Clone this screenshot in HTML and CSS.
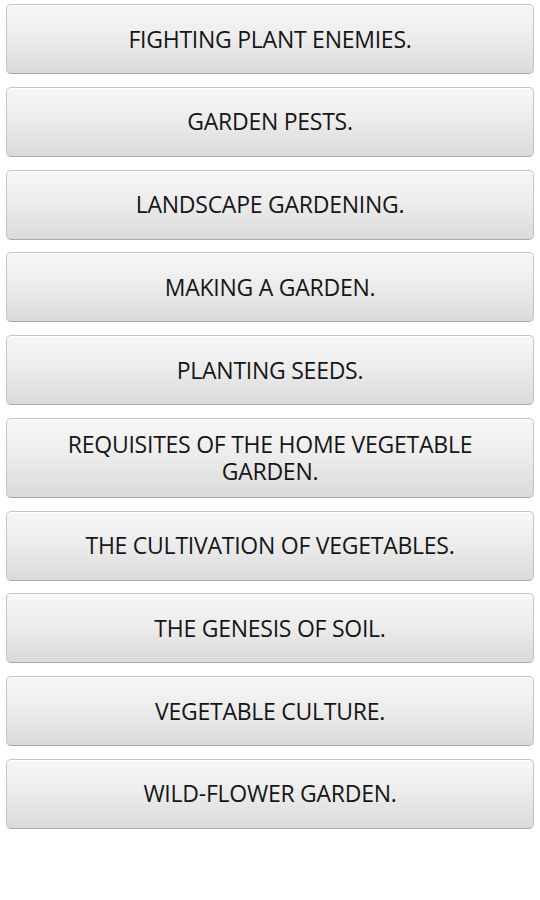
FILE: index.html
```html
<!DOCTYPE html>
<html>
<head>
<meta charset="utf-8">
<link rel="stylesheet" href="styles.css">
</head>
<body>
<div class="list">
  <div class="btn">FIGHTING PLANT ENEMIES.</div>
  <div class="btn">GARDEN PESTS.</div>
  <div class="btn">LANDSCAPE GARDENING.</div>
  <div class="btn">MAKING A GARDEN.</div>
  <div class="btn">PLANTING SEEDS.</div>
  <div class="btn">REQUISITES OF THE HOME VEGETABLE<br>GARDEN.</div>
  <div class="btn">THE CULTIVATION OF VEGETABLES.</div>
  <div class="btn">THE GENESIS OF SOIL.</div>
  <div class="btn">VEGETABLE CULTURE.</div>
  <div class="btn">WILD-FLOWER GARDEN.</div>
</div>
</body>
</html>
```

FILE: styles.css
```css
html, body {
  margin: 0;
  padding: 0;
  background: #ffffff;
}
.list {
  display: flex;
  flex-direction: column;
  gap: 12.75px;
  padding: 4px 6px 0 6px;
}
.btn {
  box-sizing: border-box;
  min-height: 70px;
  padding: 12px 10px;
  display: flex;
  align-items: center;
  justify-content: center;
  text-align: center;
  font-family: "Open Sans", "Noto Sans", sans-serif;
  font-size: 23px;
  line-height: 27px;
  letter-spacing: -0.25px;
  color: #161616;
  border: 1px solid #c4c4c4;
  border-bottom-color: #a9a9a9;
  border-radius: 5px;
  background: linear-gradient(to bottom, #f7f7f7 0%, #ededed 45%, #dadada 100%);
  box-shadow: inset 0 1px 0 #ffffff;
}
```
